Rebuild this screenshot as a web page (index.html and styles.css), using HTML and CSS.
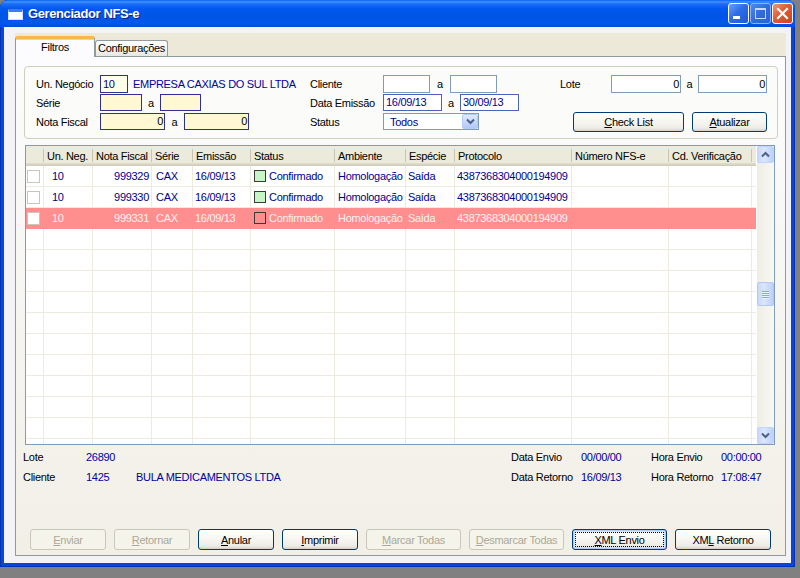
FILE: index.html
```html
<!DOCTYPE html>
<html lang="pt-BR">
<head>
    <meta charset="UTF-8">
    <title>Gerenciador NFS-e</title>
    <link rel="stylesheet" href="styles.css">
</head>
<body>
<div class="window">
    <div class="titlebar">
        <span class="app-icon"></span>
        <span class="title">Gerenciador NFS-e</span>
        <div class="caption">
            <span class="cap min"><svg width="21" height="21" viewBox="0 0 21 21"><rect x="5" y="13" width="7" height="3" fill="#fff"/></svg></span>
            <span class="cap max"><svg width="21" height="21" viewBox="0 0 21 21"><rect x="5.5" y="5.5" width="10" height="10" fill="none" stroke="#c9d8f6" stroke-width="1"/><rect x="5" y="5" width="11" height="2" fill="#c9d8f6"/></svg></span>
            <span class="cap close"><svg width="21" height="21" viewBox="0 0 21 21"><path d="M6 6 L15 15 M15 6 L6 15" stroke="#fff" stroke-width="2.2" stroke-linecap="square"/></svg></span>
        </div>
    </div>

    <div class="client">
        <div class="tabctl">
            <div class="tabstrip">
                <div class="tab active">Filtros</div>
                <div class="tab">Configurações</div>
            </div>
            <div class="page">

                <!-- filtros -->
                <div class="filters">
                    <div class="fcol col1">
                        <div class="frow">
                            <span class="lbl">Un. Negócio</span>
                            <span class="fld navy pale tall w28">10</span>
                            <span class="company">EMPRESA CAXIAS DO SUL LTDA</span>
                        </div>
                        <div class="frow">
                            <span class="lbl">Série</span>
                            <span class="fld navy yellow w42"></span>
                            <span class="sep s18">a</span>
                            <span class="fld navy yellow w41"></span>
                        </div>
                        <div class="frow">
                            <span class="lbl">Nota Fiscal</span>
                            <span class="fld navy yellow w65 num">0</span>
                            <span class="sep s19">a</span>
                            <span class="fld navy yellow w65 num">0</span>
                        </div>
                    </div>
                    <div class="fcol col2">
                        <div class="frow">
                            <span class="lbl l73">Cliente</span>
                            <span class="fld tall w47"></span>
                            <span class="sep s20">a</span>
                            <span class="fld tall w47"></span>
                        </div>
                        <div class="frow">
                            <span class="lbl l73">Data Emissão</span>
                            <span class="fld date w59">16/09/13</span>
                            <span class="sep s18">a</span>
                            <span class="fld date w59">30/09/13</span>
                        </div>
                        <div class="frow">
                            <span class="lbl l73">Status</span>
                            <span class="combo">
                                <span class="combo-text">Todos</span>
                                <span class="combo-btn"><svg width="9" height="7" viewBox="0 0 9 7"><path d="M1 1.5 L4.5 5 L8 1.5" fill="none" stroke="#4d6185" stroke-width="2"/></svg></span>
                            </span>
                        </div>
                    </div>
                    <div class="fcol col3">
                        <div class="frow">
                            <span class="lbl l51">Lote</span>
                            <span class="fld tall w70 num">0</span>
                            <span class="sep s17">a</span>
                            <span class="fld tall w69 num">0</span>
                        </div>
                        <div class="frow"></div>
                        <div class="frow">
                            <span class="btn check"><span><u>C</u>heck List</span></span>
                            <span class="btn update"><span><u>A</u>tualizar</span></span>
                        </div>
                    </div>
                </div>

                <!-- grade de notas -->
                <div class="grid">
                    <div class="grid-body">
                        <div class="row head">
                            <span></span>
                            <span>Un. Neg.</span>
                            <span>Nota Fiscal</span>
                            <span>Série</span>
                            <span>Emissão</span>
                            <span>Status</span>
                            <span>Ambiente</span>
                            <span>Espécie</span>
                            <span>Protocolo</span>
                            <span>Número NFS-e</span>
                            <span>Cd. Verificação</span>
                            <span class="filler"></span>
                        </div>
                        <div class="row">
                            <span><i class="chk"></i></span>
                            <span class="c-un">10</span>
                            <span class="c-nf">999329</span>
                            <span class="c-se">CAX</span>
                            <span class="c-em">16/09/13</span>
                            <span class="c-st"><i class="sq ok"></i>Confirmado</span>
                            <span>Homologação</span>
                            <span class="c-sp">Saída</span>
                            <span class="c-sp">4387368304000194909</span>
                            <span></span>
                            <span></span>
                            <span class="filler"></span>
                        </div>
                        <div class="row">
                            <span><i class="chk"></i></span>
                            <span class="c-un">10</span>
                            <span class="c-nf">999330</span>
                            <span class="c-se">CAX</span>
                            <span class="c-em">16/09/13</span>
                            <span class="c-st"><i class="sq ok"></i>Confirmado</span>
                            <span>Homologação</span>
                            <span class="c-sp">Saída</span>
                            <span class="c-sp">4387368304000194909</span>
                            <span></span>
                            <span></span>
                            <span class="filler"></span>
                        </div>
                        <div class="row sel">
                            <span><i class="chk"></i></span>
                            <span class="c-un">10</span>
                            <span class="c-nf">999331</span>
                            <span class="c-se">CAX</span>
                            <span class="c-em">16/09/13</span>
                            <span class="c-st"><i class="sq err"></i>Confirmado</span>
                            <span>Homologação</span>
                            <span class="c-sp">Saída</span>
                            <span class="c-sp">4387368304000194909</span>
                            <span></span>
                            <span></span>
                            <span class="filler"></span>
                        </div>
                        <div class="row"><span></span><span></span><span></span><span></span><span></span><span></span><span></span><span></span><span></span><span></span><span></span><span class="filler"></span></div>
                        <div class="row"><span></span><span></span><span></span><span></span><span></span><span></span><span></span><span></span><span></span><span></span><span></span><span class="filler"></span></div>
                        <div class="row"><span></span><span></span><span></span><span></span><span></span><span></span><span></span><span></span><span></span><span></span><span></span><span class="filler"></span></div>
                        <div class="row"><span></span><span></span><span></span><span></span><span></span><span></span><span></span><span></span><span></span><span></span><span></span><span class="filler"></span></div>
                        <div class="row"><span></span><span></span><span></span><span></span><span></span><span></span><span></span><span></span><span></span><span></span><span></span><span class="filler"></span></div>
                        <div class="row"><span></span><span></span><span></span><span></span><span></span><span></span><span></span><span></span><span></span><span></span><span></span><span class="filler"></span></div>
                        <div class="row"><span></span><span></span><span></span><span></span><span></span><span></span><span></span><span></span><span></span><span></span><span></span><span class="filler"></span></div>
                        <div class="row"><span></span><span></span><span></span><span></span><span></span><span></span><span></span><span></span><span></span><span></span><span></span><span class="filler"></span></div>
                        <div class="row"><span></span><span></span><span></span><span></span><span></span><span></span><span></span><span></span><span></span><span></span><span></span><span class="filler"></span></div>
                        <div class="row"><span></span><span></span><span></span><span></span><span></span><span></span><span></span><span></span><span></span><span></span><span></span><span class="filler"></span></div>
                        <div class="row"><span></span><span></span><span></span><span></span><span></span><span></span><span></span><span></span><span></span><span></span><span></span><span class="filler"></span></div>
                    </div>
                    <div class="vscroll">
                        <span class="sb-btn"><svg width="9" height="7" viewBox="0 0 9 7"><path d="M1 5.5 L4.5 2 L8 5.5" fill="none" stroke="#4d6185" stroke-width="2"/></svg></span>
                        <span class="sb-track">
                            <span class="sb-thumb"><i></i><i></i><i></i><i></i></span>
                        </span>
                        <span class="sb-btn"><svg width="9" height="7" viewBox="0 0 9 7"><path d="M1 1.5 L4.5 5 L8 1.5" fill="none" stroke="#4d6185" stroke-width="2"/></svg></span>
                    </div>
                </div>

                <!-- dados da nota -->
                <div class="info">
                    <span>Lote</span>
                    <span class="val">26890</span>
                    <span></span>
                    <span>Data Envio</span>
                    <span class="val">00/00/00</span>
                    <span>Hora Envio</span>
                    <span class="val">00:00:00</span>

                    <span>Cliente</span>
                    <span class="val">1425</span>
                    <span class="val">BULA MEDICAMENTOS LTDA</span>
                    <span>Data Retorno</span>
                    <span class="val">16/09/13</span>
                    <span>Hora Retorno</span>
                    <span class="val">17:08:47</span>
                </div>

                <div class="actions">
                    <span class="btn off w76"><span><u>E</u>nviar</span></span>
                    <span class="btn off w76"><span><u>R</u>etornar</span></span>
                    <span class="btn w76"><span><u>A</u>nular</span></span>
                    <span class="btn w76"><span><u>I</u>mprimir</span></span>
                    <span class="btn off w95"><span><u>M</u>arcar Todas</span></span>
                    <span class="btn off w95"><span><u>D</u>esmarcar Todas</span></span>
                    <span class="btn focus w95"><span><u>X</u>ML Envio</span></span>
                    <span class="btn w96"><span>XM<u>L</u> Retorno</span></span>
                </div>
            </div>
        </div>
    </div>
</div>
</body>
</html>
```

FILE: styles.css
```css
* {
    margin: 0;
    padding: 0;
    box-sizing: border-box;
}
body {
    width: 800px;
    height: 578px;
    overflow: hidden;
    background: #808080;
    font-family: "Liberation Sans", Arial, sans-serif;
    font-size: 11px;
    letter-spacing: -0.3px;
    color: #000;
}
u {
    text-decoration: underline;
}

/* janela */
.window {
    width: 795px;
    height: 567px;
    display: flex;
    flex-direction: column;
    background: #0a46d6;
    border-radius: 8px 8px 0 0;
    overflow: hidden;
    box-shadow: inset 1px 0 0 #0030b8, inset -1px 0 0 #0030b8, inset 0 -1px 0 #0030b8;
}
.titlebar {
    height: 27px;
    flex: none;
    display: flex;
    align-items: center;
    background: linear-gradient(180deg, #0a5ef2 0%, #3d94ff 7%, #1b6ff7 14%, #0058ee 32%, #0054e6 62%, #0058ec 86%, #0148d6 100%);
}
.app-icon {
    width: 15px;
    height: 11px;
    margin: 1px 5px 0 8px;
    background: #fff;
    border: 1px solid #d6dff5;
    border-top: 3px solid #3e7be6;
}
.title {
    color: #fff;
    font-weight: bold;
    font-size: 13px;
    letter-spacing: -0.4px;
    text-shadow: 1px 1px 0 #0a1e8c;
}
.caption {
    margin-left: auto;
    margin-right: 2px;
    display: flex;
    gap: 1px;
    align-items: center;
}
.cap {
    width: 21px;
    height: 21px;
    border: 1px solid #fff;
    border-radius: 3px;
    display: block;
    overflow: hidden;
}
.cap svg {
    display: block;
    margin: -1px;
}
.min {
    background: linear-gradient(135deg, #6fa0f8 0%, #2d6ce8 45%, #1f5ad8 100%);
}
.max {
    border-color: #8eb1f2;
    background: linear-gradient(135deg, #4f89f0 0%, #2f6ae2 50%, #2a62d8 100%);
}
.close {
    background: linear-gradient(135deg, #f0967a 0%, #e05a35 45%, #cc4420 100%);
}

.client {
    flex: 1;
    margin: 0 4px 4px 4px;
    background: #f3f3f7;
    display: flex;
}

/* abas */
.tabctl {
    flex: 1;
    margin: 6px 5px 7px 11px;
    display: flex;
    flex-direction: column;
    background: #ece9d8;
}
.tabstrip {
    height: 23px;
    flex: none;
    display: flex;
    align-items: flex-end;
}
.tab {
    height: 16px;
    width: 73px;
    border: 1px solid #919b9c;
    border-bottom: none;
    border-radius: 3px 3px 0 0;
    background: linear-gradient(#ffffff, #f3f3ef 60%, #e7e6df);
    text-align: center;
    line-height: 15px;
}
.tab.active {
    width: 80px;
    height: 21px;
    margin-bottom: -1px;
    position: relative;
    background: #fcfcfe;
    border-top: 3px solid #f5b94a;
    box-shadow: inset 0 1px 0 #ffd677;
    line-height: 16px;
    color: #000;
}
.page {
    flex: 1;
    border: 1px solid #919b9c;
    background: linear-gradient(#fcfcfe, #f5f4ef 60%, #f1efe6);
    padding: 9px 7px 0 8px;
}

/* filtros */
.filters {
    height: 73px;
    border: 1px solid #d0d0bf;
    border-radius: 4px;
    background: #fbfbf9;
    padding: 7px 0 0 11px;
    display: flex;
}
.fcol {
    display: grid;
    grid-template-rows: repeat(3, 19px);
}
.col1 { width: 274px; }
.col2 { width: 250px; }
.col3 { flex: 1; }
.frow {
    display: flex;
    align-items: center;
}
.lbl { width: 64px; }
.l73 { width: 73px; }
.l51 { width: 51px; }
.fld {
    height: 17px;
    border: 1px solid #7f9db9;
    background: #fff;
    padding: 0 2px;
    line-height: 15px;
    color: #000090;
    overflow: hidden;
    white-space: nowrap;
}
.fld.tall { height: 18px; line-height: 16px; }
.fld.navy { border-color: #2e3192; }
.fld.yellow { background: #fff8d2; }
.fld.pale { background: #fffee6; }
.fld.date { border-color: #4a64b8; }
.fld.num { text-align: right; padding-right: 1px; color: #000; }
.w28 { width: 28px; }
.w41 { width: 41px; }
.w42 { width: 42px; }
.w47 { width: 47px; }
.w59 { width: 59px; }
.w65 { width: 65px; }
.w69 { width: 69px; }
.w70 { width: 70px; }
.sep { text-align: center; }
.s17 { width: 17px; }
.s18 { width: 18px; }
.s19 { width: 19px; }
.s20 { width: 20px; }
.company {
    margin-left: 5px;
    color: #0000a0;
    white-space: nowrap;
}
.combo {
    width: 96px;
    height: 17px;
    border: 1px solid #7f9db9;
    background: #fff;
    display: flex;
    align-items: center;
}
.combo-text {
    flex: 1;
    padding-left: 6px;
    color: #000090;
}
.combo-btn {
    width: 16px;
    height: 15px;
    border: 1px solid #b7caf5;
    border-radius: 2px;
    background: linear-gradient(#e1eafe, #c4d5fb 60%, #b4c8f6);
    display: flex;
    align-items: center;
    justify-content: center;
}

/* botoes */
.btn {
    height: 21px;
    border: 1px solid #003c74;
    border-radius: 3px;
    background: linear-gradient(#ffffff, #f5f4ef 55%, #ecebe4 85%, #d6d0c5);
    display: flex;
    align-items: center;
    justify-content: center;
    white-space: nowrap;
}
.btn.off {
    border-color: #c9c7ba;
    background: #f5f4ea;
    color: #aca899;
}
.btn.focus {
    box-shadow: inset 0 0 0 1px #aecbf7, inset 0 0 0 2px #cee7ff;
    outline: 1px dotted #000;
    outline-offset: -4px;
}
.check {
    width: 111px;
    height: 20px;
    margin-left: 13px;
}
.update {
    width: 75px;
    height: 20px;
    margin-left: 8px;
}
.w76 { width: 76px; }
.w95 { width: 95px; }
.w96 { width: 96px; }

/* grade */
.grid {
    height: 300px;
    margin: 6px 3px 0 1px;
    border: 1px solid #7f9db9;
    background: #fff;
    display: flex;
}
.grid-body {
    flex: 1;
    overflow: hidden;
}
.row {
    display: grid;
    grid-template-columns: 18px 49px 59px 41px 58px 84px 71px 49px 117px 97px 83px 4px;
    height: 21px;
}
.row > span {
    border-right: 1px solid #edebe0;
    border-bottom: 1px solid #edebe0;
    padding-left: 3px;
    line-height: 20px;
    white-space: nowrap;
    overflow: hidden;
    color: #000090;
    display: flex;
    align-items: center;
}
.row > span.filler {
    border-right: none;
}
.row.head {
    height: 20px;
}
.row.head > span {
    color: #000;
    border: none;
    padding-left: 3px;
    line-height: 19px;
    background: linear-gradient(#c7c5b2, #c7c5b2) right 0 top 3px / 1px 13px no-repeat,
                linear-gradient(#ebeadb 0, #ebeadb 17px, #e2decd 17px, #d6d2c2 19px, #cbc7b8 20px);
}
.row.head > span.filler {
    background: linear-gradient(#ebeadb 0, #ebeadb 17px, #e2decd 17px, #d6d2c2 19px, #cbc7b8 20px);
}
.row .c-un { padding-left: 8px; }
.row .c-nf { justify-content: flex-end; padding-right: 2px; }
.row .c-se { padding-left: 4px; }
.row .c-em { padding-left: 2px; }
.row .c-sp { padding-left: 2px; }
.row.sel > span {
    background: #ff8e8e;
    color: #fff2f2;
    border-color: #ff8e8e;
}
.chk {
    width: 13px;
    height: 13px;
    margin-left: -2px;
    border: 1px solid #c9c7ba;
    background: #fff;
    display: block;
}
.sq {
    width: 12px;
    height: 12px;
    border: 1px solid #3a3a3a;
    margin-right: 3px;
    display: block;
    flex: none;
}
.sq.ok { background: #c8f5c8; }
.sq.err { background: #ff8e8e; }
.row .c-st { padding-left: 3px; }

/* barra de rolagem */
.vscroll {
    width: 17px;
    display: flex;
    flex-direction: column;
    background: linear-gradient(90deg, #eeede5, #f8f8f4);
}
.sb-btn {
    height: 17px;
    border: 1px solid #c3d3fd;
    border-radius: 2px;
    background: linear-gradient(90deg, #c8d8fc, #dbe6fe 40%, #bcd0f8);
    display: flex;
    align-items: center;
    justify-content: center;
}
.sb-track {
    flex: 1;
    display: flex;
    flex-direction: column;
    padding-top: 119px;
}
.sb-thumb {
    height: 24px;
    border: 1px solid #b4c8f5;
    border-radius: 2px;
    background: linear-gradient(90deg, #c8d8fc, #dbe6fe 40%, #bcd0f8);
    display: flex;
    flex-direction: column;
    align-items: center;
    justify-content: center;
    gap: 1px;
}
.sb-thumb i {
    width: 7px;
    height: 1px;
    background: #8aa6e6;
    box-shadow: 0 1px 0 #eef3fe;
}

/* dados */
.info {
    margin: 2px 0 0 -1px;
    display: grid;
    grid-template-columns: 63px 50px 375px 70px 70px 70px 1fr;
    grid-auto-rows: 20px;
    align-items: center;
    white-space: nowrap;
}
.info .val {
    color: #0000a0;
}
.actions {
    margin-top: 42px;
    padding-left: 6px;
    display: flex;
    gap: 8px;
}
```
